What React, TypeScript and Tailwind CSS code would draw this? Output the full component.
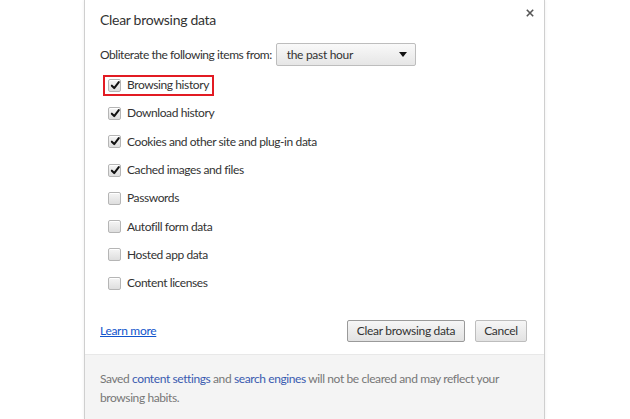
import React from "react";

const items: { label: string; checked: boolean; highlight?: boolean }[] = [
  { label: "Browsing history", checked: true, highlight: true },
  { label: "Download history", checked: true },
  { label: "Cookies and other site and plug-in data", checked: true },
  { label: "Cached images and files", checked: true },
  { label: "Passwords", checked: false },
  { label: "Autofill form data", checked: false },
  { label: "Hosted app data", checked: false },
  { label: "Content licenses", checked: false },
];

function Checkbox({ checked }: { checked: boolean }) {
  return (
    <span className="relative w-[13px] h-[13px] shrink-0 rounded-[2px] border border-[#b5b5b5] bg-gradient-to-b from-[#f5f5f5] to-[#dedede] shadow-[inset_0_1px_0_#fff]">
      {checked && (
        <svg viewBox="0 0 12 12" className="absolute left-[1px] top-[0px] w-[11px] h-[11px]">
          <path d="M2 6.2 L4.6 8.8 L9.6 2.2" fill="none" stroke="#111" strokeWidth="2.2" strokeLinecap="round" strokeLinejoin="round" />
        </svg>
      )}
    </span>
  );
}

export default function App() {
  return (
    <div
      className="w-[630px] h-[419px] bg-white overflow-hidden"
      style={{ fontFamily: 'Lato, "Open Sans", sans-serif' }}
    >
      <div className="ml-[84px] w-[461px] h-full border-x border-[#cfcfcf] flex flex-col shadow-[0_0_3px_rgba(0,0,0,0.08)]">
        <div className="relative px-[15px] pt-[10px]">
          <div className="text-[14px] leading-[20px] text-[#333] tracking-[-0.3px]">Clear browsing data</div>
          <svg viewBox="0 0 10 10" className="absolute right-[10px] top-[9px] w-[8px] h-[8px]">
            <path d="M1 1 L9 9 M9 1 L1 9" stroke="#555" strokeWidth="2" />
          </svg>
          <div className="mt-[13px] flex items-center h-[23px] text-[12px] text-[#333]">
            <span className="tracking-[-0.45px]">Obliterate the following items from:</span>
            <div className="ml-[4px] w-[140px] h-[23px] rounded-[2px] border border-[#bdbdbd] bg-gradient-to-b from-[#f9f9f9] to-[#e6e6e6] flex items-center pl-[10px] pr-[8px] justify-between">
              <span className="tracking-[-0.3px]">the past hour</span>
              <svg viewBox="0 0 8 5" className="w-[8px] h-[5px]">
                <path d="M0 0 L8 0 L4 5 Z" fill="#111" />
              </svg>
            </div>
          </div>
          <div className="mt-[5px] pl-[8px]">
            {items.map((it) => (
              <div key={it.label} className="h-[28.3px] flex items-center">
                <div
                  className={
                    "flex items-center h-[17px] " +
                    (it.highlight ? "outline outline-2 outline-[#e21b23] -ml-[3px] pl-[3px] pr-[3px]" : "")
                  }
                >
                  <Checkbox checked={it.checked} />
                  <span className="ml-[6px] text-[12px] text-[#333] whitespace-nowrap tracking-[-0.4px]">{it.label}</span>
                </div>
              </div>
            ))}
          </div>
          <div className="mt-[23px] flex items-center h-[22px]">
            <a className="text-[12px] text-[#1155cc] underline tracking-[-0.3px]">Learn more</a>
            <div className="ml-auto flex gap-[10px] pr-[2px]">
              <button className="h-[22px] w-[118px] rounded-[2px] border border-[#9a9a9a] bg-gradient-to-b from-[#f6f6f6] to-[#e2e2e2] text-[12px] text-[#333] tracking-[-0.3px]">
                Clear browsing data
              </button>
              <button className="h-[22px] w-[52px] rounded-[2px] border border-[#bdbdbd] bg-gradient-to-b from-[#f6f6f6] to-[#e2e2e2] text-[12px] text-[#333] tracking-[-0.3px]">
                Cancel
              </button>
            </div>
          </div>
        </div>
        <div className="mt-[12px] flex-1 bg-[#f4f4f4] border-t border-[#e8e8e8] px-[15px] pt-[14px] text-[12px] leading-[19px] text-[#777] tracking-[-0.4px] whitespace-nowrap">
          Saved <span className="text-[#3a5bb0]">content settings</span> and{" "}
          <span className="text-[#3a5bb0]">search engines</span> will not be cleared and may reflect your
          <br />
          browsing habits.
        </div>
      </div>
    </div>
  );
}
